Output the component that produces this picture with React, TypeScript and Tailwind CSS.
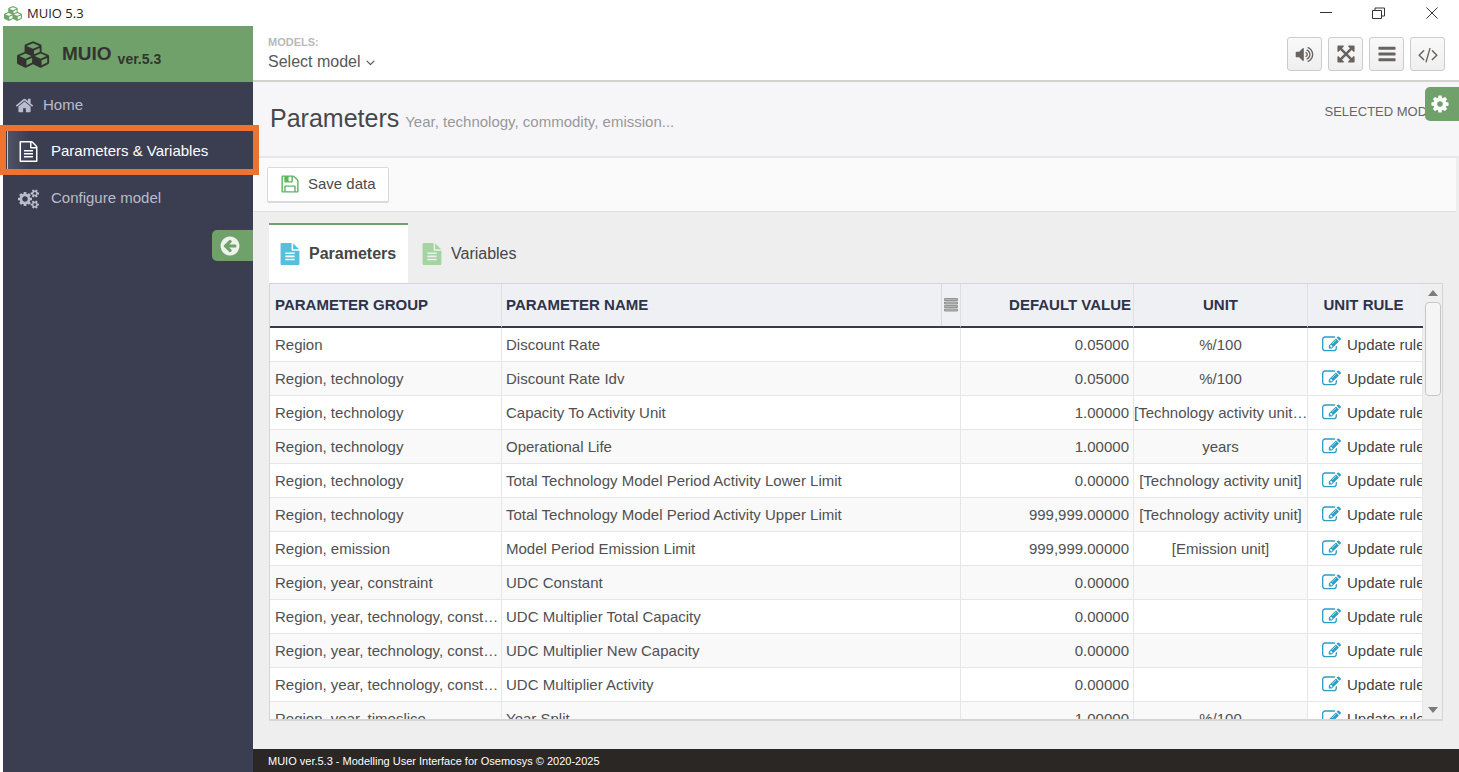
import type { ReactNode } from 'react';

type Glyph = { box: string; d: string };

const glyphs = {
  home: {
    box: '0 0 1792 1792',
    d: 'M1472 992v480q0 26-19 45t-45 19h-384v-384h-256v384h-384q-26 0-45-19t-19-45v-480q0-1 .5-3t.5-3l575-474 575 474q1 2 1 6zm223-69l-62 74q-8 9-21 11h-3q-13 0-21-7l-692-577-692 577q-12 8-24 7-13-2-21-11l-62-74q-8-10-7-23.5t11-21.5l719-599q32-26 76-26t76 26l244 204v-195q0-14 9-23t23-9h192q14 0 23 9t9 23v408l219 182q10 8 11 21.5t-7 23.5z',
  },
  fileOutline: {
    box: '0 0 1792 1792',
    d: 'M1596 380q28 28 48 76t20 88v1152q0 40-28 68t-68 28h-1344q-40 0-68-28t-28-68v-1600q0-40 28-68t68-28h896q40 0 88 20t76 48zm-444-244v376h376q-10-29-22-41l-313-313q-12-12-41-22zm384 1528v-1024h-416q-40 0-68-28t-28-68v-416h-768v1536h1280zm-1024-864q0-14 9-23t23-9h704q14 0 23 9t9 23v64q0 14-9 23t-23 9h-704q-14 0-23-9t-9-23v-64zm736 224q14 0 23 9t9 23v64q0 14-9 23t-23 9h-704q-14 0-23-9t-9-23v-64q0-14 9-23t23-9h704zm0 256q14 0 23 9t9 23v64q0 14-9 23t-23 9h-704q-14 0-23-9t-9-23v-64q0-14 9-23t23-9h704z',
  },
  file: {
    box: '0 0 1792 1792',
    d: 'M1596 476q14 14 28 36h-472v-472q22 14 36 28zm-476 164h544v1056q0 40-28 68t-68 28h-1344q-40 0-68-28t-28-68v-1600q0-40 28-68t68-28h800v544q0 40 28 68t68 28zm160 736v-64q0-14-9-23t-23-9h-704q-14 0-23 9t-9 23v64q0 14 9 23t23 9h704q14 0 23-9t9-23zm0-256v-64q0-14-9-23t-23-9h-704q-14 0-23 9t-9 23v64q0 14 9 23t23 9h704q14 0 23-9t9-23zm0-256v-64q0-14-9-23t-23-9h-704q-14 0-23 9t-9 23v64q0 14 9 23t23 9h704q14 0 23-9t9-23z',
  },
  cogs: {
    box: '0 0 1920 1792',
    d: 'M896 896q0-106-75-181t-181-75-181 75-75 181 75 181 181 75 181-75 75-181zm768 512q0-52-38-90t-90-38-90 38-38 90q0 53 37.5 90.5t90.5 37.5 90.5-37.5 37.5-90.5zm0-1024q0-52-38-90t-90-38-90 38-38 90q0 53 37.5 90.5t90.5 37.5 90.5-37.5 37.5-90.5zm-384 421v185q0 10-7 19.5t-16 10.5l-155 24q-11 35-32 76 34 48 90 115 7 11 7 20 0 12-7 19-23 30-82.5 89.5t-78.5 59.5q-11 0-21-7l-115-90q-37 19-77 31-11 108-23 155-7 24-30 24h-186q-11 0-20-7.5t-10-17.5l-23-153q-34-10-75-31l-118 89q-7 7-20 7-11 0-21-8-144-133-144-160 0-9 7-19 10-14 41-53t47-61q-23-44-35-82l-152-24q-10-1-17-9.5t-7-19.5v-185q0-10 7-19.5t16-10.5l155-24q11-35 32-76-34-48-90-115-7-11-7-20 0-12 7-20 22-30 82-89t79-59q11 0 21 7l115 90q34-18 77-32 11-108 23-154 7-24 30-24h186q11 0 20 7.5t10 17.5l23 153q34 10 75 31l118-89q8-7 20-7 11 0 21 8 144 133 144 160 0 8-7 19-12 16-42 54t-45 60q23 48 34 82l152 23q10 2 17 10.5t7 19.5zm640 533v140q0 16-149 31-12 27-30 52 51 113 51 138 0 4-4 7-122 71-124 71-8 0-46-47t-52-68q-20 2-30 2t-30-2q-14 21-52 68t-46 47q-2 0-124-71-4-3-4-7 0-25 51-138-18-25-30-52-149-15-149-31v-140q0-16 149-31 13-29 30-52-51-113-51-138 0-4 4-7 4-2 35-20t59-34 30-16q8 0 46 46.5t52 67.5q20-2 30-2t30 2q51-71 92-112l6-2q4 0 124 70 4 3 4 7 0 25-51 138 17 23 30 52 149 15 149 31zm0-1024v140q0 16-149 31-12 27-30 52 51 113 51 138 0 4-4 7-122 71-124 71-8 0-46-47t-52-68q-20 2-30 2t-30-2q-14 21-52 68t-46 47q-2 0-124-71-4-3-4-7 0-25 51-138-18-25-30-52-149-15-149-31v-140q0-16 149-31 13-29 30-52-51-113-51-138 0-4 4-7 4-2 35-20t59-34 30-16q8 0 46 46.5t52 67.5q20-2 30-2t30 2q51-71 92-112l6-2q4 0 124 70 4 3 4 7 0 25-51 138 17 23 30 52 149 15 149 31z',
  },
  cog: {
    box: '0 0 1792 1792',
    d: 'M1152 896q0-106-75-181t-181-75-181 75-75 181 75 181 181 75 181-75 75-181zm512-109v222q0 12-8 23t-20 13l-185 28q-19 54-39 91 35 50 107 138 10 12 10 25t-9 23q-27 37-99 108t-94 71q-12 0-26-9l-138-108q-44 23-91 38-16 136-29 186-7 28-36 28h-222q-14 0-24.5-8.5t-11.5-21.5l-28-184q-49-16-90-37l-141 107q-10 9-25 9-14 0-25-11-126-114-165-168-7-10-7-23 0-12 8-23 15-21 51-66.5t54-70.5q-27-50-41-99l-183-27q-13-2-21-12.5t-8-23.5v-222q0-12 8-23t19-13l186-28q14-46 39-92-40-57-107-138-10-12-10-24 0-10 9-23 26-36 98.5-107.5t94.5-71.5q13 0 26 10l138 107q44-23 91-38 16-136 29-186 7-28 36-28h222q14 0 24.5 8.5t11.5 21.5l28 184q49 16 90 37l142-107q9-9 24-9 13 0 25 10 129 119 165 170 7 8 7 22 0 12-8 23-15 21-51 66.5t-54 70.5q26 50 41 98l183 28q13 2 21 12.5t8 23.5z',
  },
  arrowLeft: {
    box: '0 0 1792 1792',
    d: 'M1408 960v-128q0-26-19-45t-45-19h-502l189-189q19-19 19-45t-19-45l-91-91q-18-18-45-18t-45 18l-362 362-91 91q-18 18-18 45t18 45l91 91 362 362q18 18 45 18t45-18l91-91q18-18 18-45t-18-45l-189-189h502q26 0 45-19t19-45zm256-64q0 209-103 385.5t-279.5 279.5-385.5 103-385.5-103-279.5-279.5-103-385.5 103-385.5 279.5-279.5 385.5-103 385.5 103 279.5 279.5 103 385.5z',
  },
  code: {
    box: '0 0 2048 1792',
    d: 'M681 1399l-50 50q-10 10-23 10t-23-10l-466-466q-10-10-10-23t10-23l466-466q10-10 23-10t23 10l50 50q10 10 10 23t-10 23l-393 393 393 393q10 10 10 23t-10 23zm591-1067l-373 1291q-4 13-15.5 19.5t-23.5 2.5l-62-17q-13-4-19.5-15.5t-2.5-24.5l373-1291q4-13 15.5-19.5t23.5-2.5l62 17q13 4 19.5 15.5t2.5 24.5zm657 651l-466 466q-10 10-23 10t-23-10l-50-50q-10-10-10-23t10-23l393-393-393-393q-10-10-10-23t10-23l50-50q10-10 23-10t23 10l466 466q10 10 10 23t-10 23z',
  },
  bars: {
    box: '0 0 1792 1792',
    d: 'M1664 1344v128q0 26-19 45t-45 19h-1408q-26 0-45-19t-19-45v-128q0-26 19-45t45-19h1408q26 0 45 19t19 45zm0-512v128q0 26-19 45t-45 19h-1408q-26 0-45-19t-19-45v-128q0-26 19-45t45-19h1408q26 0 45 19t19 45zm0-512v128q0 26-19 45t-45 19h-1408q-26 0-45-19t-19-45v-128q0-26 19-45t45-19h1408q26 0 45 19t19 45z',
  },
  expand: {
    box: '0 0 1792 1792',
    d: 'M1411 541l-355 355 355 355 144-144q29-31 70-14 39 17 39 59v448q0 26-19 45t-45 19h-448q-42 0-59-40-17-39 14-69l144-144-355-355-355 355 144 144q31 30 14 69-17 40-59 40h-448q-26 0-45-19t-19-45v-448q0-42 40-59 39-17 69 14l144 144 355-355-355-355-144 144q-19 19-45 19-12 0-24-5-40-17-40-59v-448q0-26 19-45t45-19h448q42 0 59 40 17 39-14 69l-144 144 355 355 355-355-144-144q-31-30-14-69 17-40 59-40h448q26 0 45 19t19 45v448q0 42-39 59-13 5-25 5-26 0-45-19z',
  },
  volume: {
    box: '0 0 1792 1792',
    d: 'M832 352v1088q0 26-19 45t-45 19-45-19l-333-333h-262q-26 0-45-19t-19-45v-384q0-26 19-45t45-19h262l333-333q19-19 45-19t45 19 19 45zm384 544q0 76-42.5 141.5t-112.5 93.5q-10 5-25 5-26 0-45-18.5t-19-45.5q0-21 12-35.5t29-25 34-23 29-36 12-56.5-12-56.5-29-36-34-23-29-25-12-35.5q0-27 19-45.5t45-18.5q15 0 25 5 70 27 112.5 93t42.5 142zm256 0q0 153-85 282.5t-225 188.5q-13 5-25 5-27 0-46-19t-19-45q0-39 39-59 56-29 76-44 74-54 115.5-135.5t41.5-173.5-41.5-173.5-115.5-135.5q-20-15-76-44-39-20-39-59 0-26 19-45t45-19q13 0 26 5 140 59 225 188.5t85 282.5zm256 0q0 230-127 422.5t-338 283.5q-13 5-26 5-26 0-45-19t-19-45q0-36 39-59 7-4 22.5-10.5t22.5-10.5q46-25 82-51 123-91 192-227t69-289-69-289-192-227q-36-26-82-51-7-4-22.5-10.5t-22.5-10.5q-39-23-39-59 0-26 19-45t45-19q13 0 26 5 211 91 338 283.5t127 422.5z',
  },
  save: {
    box: '0 0 1792 1792',
    d: 'M512 1536h768v-384h-768v384zm896 0h128v-896q0-14-10-38.5t-20-34.5l-281-281q-10-10-34-20t-39-10v416q0 40-28 68t-68 28h-576q-40 0-68-28t-28-68v-416h-128v1280h128v-416q0-40 28-68t68-28h832q40 0 68 28t28 68v416zm-384-928v-320q0-13-9.5-22.5t-22.5-9.5h-192q-13 0-22.5 9.5t-9.5 22.5v320q0 13 9.5 22.5t22.5 9.5h192q13 0 22.5-9.5t9.5-22.5zm640 32v928q0 40-28 68t-68 28h-1344q-40 0-68-28t-28-68v-1344q0-40 28-68t68-28h928q40 0 88 20t76 48l280 280q28 28 48 76t20 88z',
  },
  edit: {
    box: '0 0 1792 1792',
    d: 'M888 1184l116-116-152-152-116 116v56h96v96h56zm440-720q-16-16-33 1l-350 350q-17 17-1 33t33-1l350-350q17-17 1-33zm80 594v190q0 119-84.5 203.5t-203.5 84.5h-832q-119 0-203.5-84.5t-84.5-203.5v-832q0-119 84.5-203.5t203.5-84.5h832q63 0 117 25 15 7 18 23 3 17-9 29l-49 49q-14 14-32 8-23-6-45-6h-832q-66 0-113 47t-47 113v832q0 66 47 113t113 47h832q66 0 113-47t47-113v-126q0-13 9-22l64-64q15-15 35-7t20 29zm-96-738l288 288-672 672h-288v-288zm444 132l-92 92-288-288 92-92q28-28 68-28t68 28l152 152q28 28 28 68t-28 68z',
  },
  angleDown: {
    box: '0 0 1792 1792',
    d: 'M1395 736q0 13-10 23l-466 466q-10 10-23 10t-23-10l-466-466q-10-10-10-23t10-23l50-50q10-10 23-10t23 10l393 393 393-393q10-10 23-10t23 10l50 50q10 10 10 23z',
  },
  cubes: {
    box: '0 0 2304 1792',
    d: 'M640 1632l384-192v-314l-384 164v342zm-64-454l404-173-404-173-404 173zm1088 454l384-192v-314l-384 164v342zm-64-454l404-173-404-173-404 173zm-448-293l384-165v-266l-384 164v267zm-64-379l441-189-441-189-441 189zm1088 518v416q0 36-19 67t-52 47l-448 224q-25 14-57 14t-57-14l-448-224q-4-2-7-4-2 2-7 4l-448 224q-25 14-57 14t-57-14l-448-224q-33-16-52-47t-19-67v-416q0-38 21.5-70t56.5-48l434-186v-400q0-38 21.5-70t56.5-48l448-192q23-10 50-10t50 10l448 192q35 16 56.5 48t21.5 70v400l434 186q36 16 57 48t21 70z',
  },
} satisfies Record<string, Glyph>;

function Icon({ name, className }: { name: keyof typeof glyphs; className: string }) {
  const g = glyphs[name];
  return (
    <svg viewBox={g.box} fill="currentColor" aria-hidden="true" className={`block shrink-0 ${className}`}>
      <path d={g.d} />
    </svg>
  );
}

const rows = [
  ['Region', 'Discount Rate', '0.05000', '%/100'],
  ['Region, technology', 'Discount Rate Idv', '0.05000', '%/100'],
  ['Region, technology', 'Capacity To Activity Unit', '1.00000', '[Technology activity unit…'],
  ['Region, technology', 'Operational Life', '1.00000', 'years'],
  ['Region, technology', 'Total Technology Model Period Activity Lower Limit', '0.00000', '[Technology activity unit]'],
  ['Region, technology', 'Total Technology Model Period Activity Upper Limit', '999,999.00000', '[Technology activity unit]'],
  ['Region, emission', 'Model Period Emission Limit', '999,999.00000', '[Emission unit]'],
  ['Region, year, constraint', 'UDC Constant', '0.00000', ''],
  ['Region, year, technology, const…', 'UDC Multiplier Total Capacity', '0.00000', ''],
  ['Region, year, technology, const…', 'UDC Multiplier New Capacity', '0.00000', ''],
  ['Region, year, technology, const…', 'UDC Multiplier Activity', '0.00000', ''],
  ['Region, year, timeslice', 'Year Split', '1.00000', '%/100'],
];

function TitleBar() {
  return (
    <div className="flex h-[26px] shrink-0 items-center bg-white pl-[4px] pr-[1px]">
      <Icon name="cubes" className="h-[15px] w-[19px] text-[#6fa568]" />
      <span className="ml-1 grow font-['Open_Sans',sans-serif] text-[13px] leading-5 text-[#222]">MUIO 5.3</span>
      <button aria-label="Minimize" className="flex h-[26px] w-[53px] items-center justify-center text-[#333]">
        <svg viewBox="0 0 12 12" className="size-3" stroke="currentColor" fill="none">
          <path d="M0 5.5h12" />
        </svg>
      </button>
      <button aria-label="Restore" className="flex h-[26px] w-[53px] items-center justify-center text-[#333]">
        <svg viewBox="0 0 13 13" className="size-[13px]" stroke="currentColor" fill="none">
          <path d="M.5 3.5h9v8h-9zM3 3.5v-2.500h9.500v8H9.500" />
        </svg>
      </button>
      <button aria-label="Close" className="flex h-[26px] w-[53px] items-center justify-center text-[#333]">
        <svg viewBox="0 0 12 12" className="size-3" stroke="currentColor" fill="none">
          <path d="M.5.5l11 11M11.500.5l-11 11" />
        </svg>
      </button>
    </div>
  );
}

function Sidebar() {
  return (
    <aside className="ml-[3px] flex w-[250px] shrink-0 flex-col bg-[#3b3e50] text-[15px] text-[#b9bccb]">
      <div className="flex h-[56px] shrink-0 items-center bg-[#71a16b] pl-[14px] font-bold text-[#33342f]">
        <Icon name="cubes" className="h-[27px] w-[34px]" />
        <span className="ml-[11px] text-[19px] leading-6">MUIO</span>
        <span className="ml-[6px] mt-[9px] text-[14px] leading-5">ver.5.3</span>
      </div>
      <nav className="flex flex-col">
        <a href="#home" className="flex h-[46px] items-center gap-[9px] pl-3">
          <Icon name="home" className="size-[19px]" />
          Home
        </a>
        <a href="#parameters" className="relative flex h-[47px] items-center gap-3 pl-[15px] text-white">
          <span className="absolute inset-y-0 left-[4px] w-6 border-l border-[#c8c8cc] bg-linear-to-r from-[#4f5264] to-[#3b3e50]" />
          <Icon name="fileOutline" className="relative size-[21px]" />
          Parameters &amp; Variables
          <span className="absolute -left-[3px] -right-[6px] -top-[3px] bottom-0 z-10 border-[6px] border-[#ed7430]" />
        </a>
        <a href="#configure" className="flex h-[47px] items-center gap-3 pl-[15px]">
          <Icon name="cogs" className="h-[20px] w-[21px]" />
          Configure model
        </a>
      </nav>
      <button
        aria-label="Collapse menu"
        className="mt-2 flex h-[31px] w-[41px] items-center self-end rounded-l-[5px] bg-[#71a16b] pl-[7px] text-[#edf4ec]"
      >
        <Icon name="arrowLeft" className="size-[22px]" />
      </button>
    </aside>
  );
}

function HeaderButton({ label, children }: { label: string; children: ReactNode }) {
  return (
    <button
      aria-label={label}
      className="flex h-[34px] w-[35px] items-center justify-center rounded-[3px] border border-[#ccc] bg-linear-to-b from-[#f9f9f9] to-[#efefef] text-[#69635f]"
    >
      {children}
    </button>
  );
}

function TopBar() {
  return (
    <header className="flex h-[56px] shrink-0 items-center justify-between border-b-2 border-[#d2d2cf] bg-white pl-[15px] pr-[14px] pt-[2px]">
      <div className="flex flex-col">
        <label htmlFor="model" className="text-[11px] font-bold leading-4 text-[#b9b9b9]">
          MODELS:
        </label>
        <div className="flex items-center">
          <select id="model" className="h-6 w-[95px] appearance-none text-[16px] text-[#58585a]">
            <option>Select model</option>
          </select>
          <Icon name="angleDown" className="size-[15px] text-[#555]" />
        </div>
      </div>
      <div className="flex gap-[6px]">
        <HeaderButton label="Sound">
          <Icon name="volume" className="size-[19px]" />
        </HeaderButton>
        <HeaderButton label="Full screen">
          <Icon name="expand" className="size-5" />
        </HeaderButton>
        <HeaderButton label="Menu">
          <Icon name="bars" className="size-5" />
        </HeaderButton>
        <HeaderButton label="Source">
          <Icon name="code" className="h-[19px] w-[22px]" />
        </HeaderButton>
      </div>
    </header>
  );
}

const cell = 'overflow-hidden whitespace-nowrap border-b border-r border-[#e6e6e6] p-0';
const head = 'border-b-2 border-r border-b-[#353a50] border-r-[#e0e0e3] p-0';

function ParameterTable() {
  return (
    <div className="flex min-h-0 grow overflow-hidden border border-b-2 border-[#d5d5d5] bg-[#efefef]">
      <div className="min-w-0 grow overflow-hidden bg-white">
        <table className="w-full table-fixed border-separate border-spacing-0 text-[15px] leading-5 text-[#505052]">
          <colgroup>
            <col className="w-[232px]" />
            <col />
            <col className="w-[173px]" />
            <col className="w-[174px]" />
            <col className="w-[115px]" />
          </colgroup>
          <thead className="bg-[#eff0f4] text-[#2d334a]">
            <tr className="h-[44px]">
              <th className={`${head} pl-[5px] text-left`}>PARAMETER GROUP</th>
              <th className={`${head} text-left`}>
                <div className="flex h-[42px] items-center justify-between pl-1">
                  PARAMETER NAME
                  <button aria-label="Column menu" className="flex h-full w-[19px] items-center justify-center border-l border-[#d8d8da]">
                    <svg viewBox="0 0 14 14" className="size-[14px]" fill="#b4b4b4" stroke="#949494">
                      <path d="M.5.5h13v2H.5zM.5 4h13v2H.5zM.5 7.500h13v2H.5zM.5 11h13v2H.5z" />
                    </svg>
                  </button>
                </div>
              </th>
              <th className={`${head} pr-[2px] text-right`}>DEFAULT VALUE</th>
              <th className={`${head} text-center`}>UNIT</th>
              <th className="border-b-2 border-b-[#353a50] p-0 pr-1 text-center">UNIT RULE</th>
            </tr>
          </thead>
          <tbody>
            {rows.map(([group, name, value, unit], i) => (
              <tr key={name} className={i % 2 ? 'h-[34px] bg-[#f9f9f9]' : 'h-[34px] bg-white'}>
                <td className={`${cell} pl-[5px]`}>{group}</td>
                <td className={`${cell} pl-1`}>{name}</td>
                <td className={`${cell} pr-1 text-right`}>{value}</td>
                <td className={`${cell} text-center`}>{unit}</td>
                <td className="overflow-hidden border-b border-r border-[#e6e6e6] bg-white p-0">
                  <button className="flex items-center gap-[6px] whitespace-nowrap pl-[14px] text-[#424244]">
                    <Icon name="edit" className="size-[19px] text-[#2f9dc4]" />
                    Update rule
                  </button>
                </td>
              </tr>
            ))}
          </tbody>
        </table>
      </div>
      <div className="flex w-[19px] shrink-0 flex-col items-center bg-[#efefef]">
        <button aria-label="Scroll up" className="flex h-[18px] w-full items-center justify-center">
          <svg viewBox="0 0 10 6" className="h-[6px] w-[10px]" fill="#7b7b7b">
            <path d="M5 0l5 6H0z" />
          </svg>
        </button>
        <div className="h-[94px] w-4 rounded-[4px] border border-[#c6c6c6] bg-[#f5f5f5]" />
        <button aria-label="Scroll down" className="mt-auto flex h-[18px] w-full items-center justify-center">
          <svg viewBox="0 0 10 6" className="h-[6px] w-[10px]" fill="#7b7b7b">
            <path d="M0 0h10L5 6z" />
          </svg>
        </button>
      </div>
    </div>
  );
}

export default function App() {
  return (
    <div className="flex h-screen flex-col overflow-hidden bg-white font-['Liberation_Sans',Arial,sans-serif]">
      <TitleBar />
      <div className="flex min-h-0 grow">
        <Sidebar />
        <div className="flex min-w-0 grow flex-col bg-[#eeeeee]">
          <TopBar />
          <section className="relative flex h-[76px] shrink-0 justify-between overflow-hidden border-b-2 border-[#e6e7ec] bg-[#f6f6f9] pl-[17px] pt-5">
            <h1 className="flex h-8 items-baseline gap-[6px] whitespace-nowrap text-[25px] leading-8 text-[#46484c]">
              Parameters
              <small className="text-[15px] text-[#98989b]">Year, technology, commodity, emission...</small>
            </h1>
            <p className="pr-4 text-[13px] leading-5 text-[#666]">SELECTED MODEL</p>
            <button
              aria-label="Settings"
              className="absolute right-0 top-[5px] flex h-[34px] w-[34px] items-center rounded-l-[5px] bg-[#71a16b] pl-[5px] text-white"
            >
              <Icon name="cog" className="size-5" />
            </button>
          </section>
          <section className="mr-[3px] flex h-[54px] shrink-0 items-center border-b border-[#dedede] bg-[#fafafa] pl-[14px]">
            <button className="flex h-9 w-[122px] items-center gap-2 rounded-[2px] border border-b-2 border-[#dadada] bg-white pl-3 text-[15px] text-[#4a4a4c]">
              <Icon name="save" className="size-5 text-[#5cb860]" />
              Save data
            </button>
          </section>
          <main className="flex min-h-0 grow flex-col pb-7 pl-4 pr-4 pt-[11px]">
            <div role="tablist" className="flex h-[60px] shrink-0 text-[16px] text-[#454547]">
              <button
                role="tab"
                aria-selected="true"
                className="flex w-[139px] items-center gap-2 border-t-2 border-[#71a16b] bg-white pl-[10px] font-bold"
              >
                <Icon name="file" className="size-[22px] text-[#57bfde]" />
                Parameters
              </button>
              <button role="tab" aria-selected="false" className="flex items-center gap-2 pl-[13px] pr-4 pt-[2px]">
                <Icon name="file" className="size-[22px] text-[#a3d4a2]" />
                Variables
              </button>
            </div>
            <ParameterTable />
          </main>
          <footer className="flex h-[23px] shrink-0 items-center bg-[#2a2725] pl-[15px] pt-[2px] text-[11px] text-white">
            MUIO ver.5.3 - Modelling User Interface for Osemosys © 2020-2025
          </footer>
        </div>
      </div>
    </div>
  );
}
